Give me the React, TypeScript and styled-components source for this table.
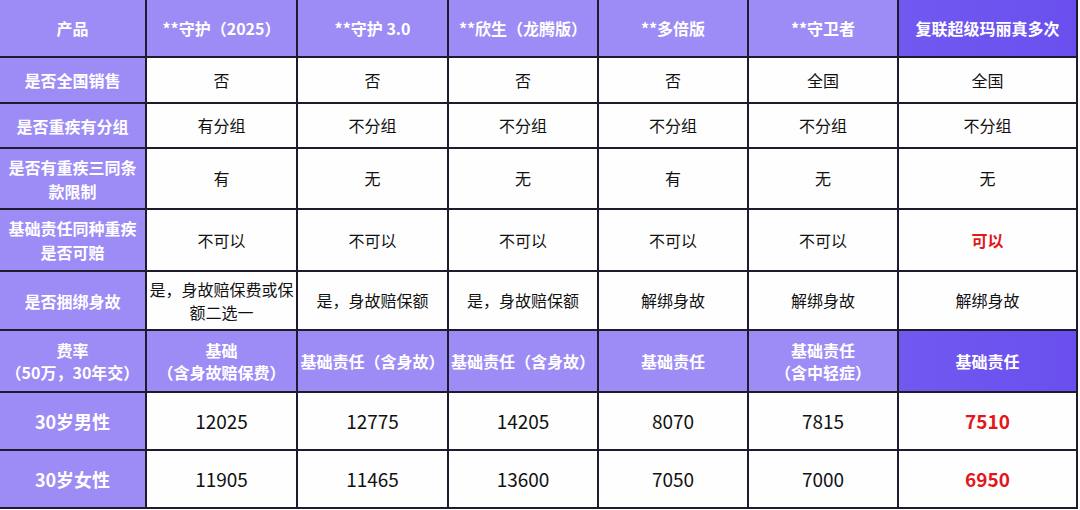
import React from "react";
import styled, { createGlobalStyle } from "styled-components";

const Global = createGlobalStyle`
  html, body { margin: 0; padding: 0; background: #ffffff; }
  body { font-family: "Noto Sans CJK SC", "Noto Sans", sans-serif; }
`;

const Table = styled.div`
  display: grid;
  grid-template-columns: 145px 149px 149px 148px 148px 148px 177px;
  grid-template-rows: 56px 44px 43px 59px 60px 57px 60px 56px 56px;
  gap: 2px;
  padding: 0 2px 2px 0;
  width: fit-content;
  background: #1d1b2e;
`;

type Tone = "head" | "accent" | "body";

const Cell = styled.div<{ $tone: Tone; $size?: number; $bold?: boolean; $red?: boolean }>`
  display: flex;
  align-items: center;
  justify-content: center;
  text-align: center;
  padding: 0 2px;
  line-height: 1.38;
  font-size: ${(p) => p.$size ?? 16}px;
  font-weight: ${(p) => (p.$bold || p.$tone !== "body" ? 700 : 400)};
  background: ${(p) =>
    p.$tone === "head" ? "#9d8cf5" : p.$tone === "accent" ? "linear-gradient(90deg, #7159f0, #6a4fee)" : "#fefefe"};
  color: ${(p) => (p.$red ? "#e3171b" : p.$tone === "body" ? "#111111" : "#ffffff")};
`;

const products = ["**守护（2025）", "**守护 3.0", "**欣生（龙腾版）", "**多倍版", "**守卫者", "复联超级玛丽真多次"];

type Row = { label: string; cells: string[]; head?: boolean; num?: boolean; redLast?: boolean };

const rows: Row[] = [
  { label: "是否全国销售", cells: ["否", "否", "否", "否", "全国", "全国"] },
  { label: "是否重疾有分组", cells: ["有分组", "不分组", "不分组", "不分组", "不分组", "不分组"] },
  { label: "是否有重疾三同条款限制", cells: ["有", "无", "无", "有", "无", "无"] },
  { label: "基础责任同种重疾是否可赔", cells: ["不可以", "不可以", "不可以", "不可以", "不可以", "可以"], redLast: true },
  { label: "是否捆绑身故", cells: ["是，身故赔保费或保额二选一", "是，身故赔保额", "是，身故赔保额", "解绑身故", "解绑身故", "解绑身故"] },
  {
    label: "费率\n（50万，30年交）",
    cells: ["基础\n（含身故赔保费）", "基础责任（含身故）", "基础责任（含身故）", "基础责任", "基础责任\n（含中轻症）", "基础责任"],
    head: true,
  },
  { label: "30岁男性", cells: ["12025", "12775", "14205", "8070", "7815", "7510"], num: true, redLast: true },
  { label: "30岁女性", cells: ["11905", "11465", "13600", "7050", "7000", "6950"], num: true, redLast: true },
];

const Lines = ({ text }: { text: string }) => (
  <span>
    {text.split("\n").map((t, i) => (
      <React.Fragment key={i}>
        {i > 0 && <br />}
        {t}
      </React.Fragment>
    ))}
  </span>
);

const LabelText = styled.span`
  display: block;
  max-width: 8em;
  margin: 0 auto;
  line-height: 1.5;
`;

const BodyText = styled.span`
  display: block;
  max-width: 9.2em;
  margin: 0 auto;
`;

export default function App() {
  return (
    <>
      <Global />
      <Table>
        <Cell $tone="head">产品</Cell>
        {products.map((p, i) => (
          <Cell key={p} $tone={i === 5 ? "accent" : "head"}>
            {p}
          </Cell>
        ))}
        {rows.map((r) => (
          <React.Fragment key={r.label}>
            <Cell $tone="head" $size={r.num ? 18 : 16}>
              {r.label.includes("\n") ? <Lines text={r.label} /> : <LabelText>{r.label}</LabelText>}
            </Cell>
            {r.cells.map((c, i) => {
              const last = i === 5;
              const tone: Tone = r.head ? (last ? "accent" : "head") : "body";
              return (
                <Cell
                  key={i}
                  $tone={tone}
                  $size={r.num ? 19 : 16}
                  $red={last && r.redLast}
                  $bold={last && r.redLast}
                >
                  {c.includes("\n") ? <Lines text={c} /> : <BodyText>{c}</BodyText>}
                </Cell>
              );
            })}
          </React.Fragment>
        ))}
      </Table>
    </>
  );
}
